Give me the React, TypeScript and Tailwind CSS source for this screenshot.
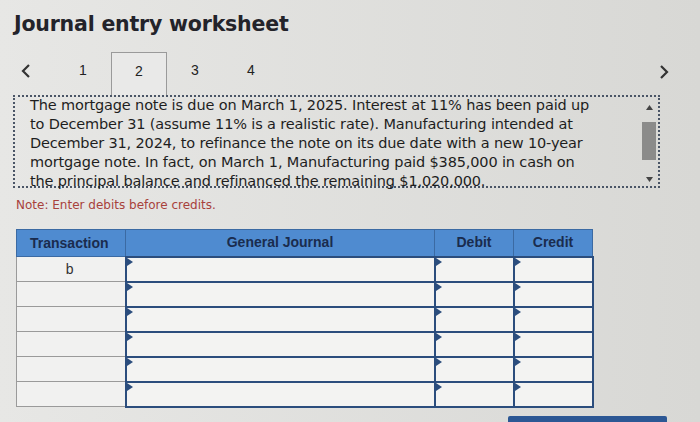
import React from "react";

const lines = [
  "The mortgage note is due on March 1, 2025. Interest at 11% has been paid up",
  "to December 31 (assume 11% is a realistic rate). Manufacturing intended at",
  "December 31, 2024, to refinance the note on its due date with a new 10-year",
  "mortgage note. In fact, on March 1, Manufacturing paid $385,000 in cash on",
  "the principal balance and refinanced the remaining $1,020,000.",
];

function InputCell({ w }: { w: string }) {
  return (
    <td className={`relative ${w} h-[25px] border-2 border-[#2b4d7d] bg-[#f3f3f2] p-0`}>
      <span className="absolute left-0 top-0 w-0 h-0 border-t-[4px] border-b-[4px] border-l-[6px] border-t-transparent border-b-transparent border-l-[#2b4d7d]" />
    </td>
  );
}

export default function App() {
  return (
    <div className="w-[700px] h-[422px] overflow-hidden bg-gradient-to-r from-[#e7e7e5] to-[#d8d8d5] font-['DejaVu_Sans',sans-serif] text-[#222]">
      <h1 className="pt-[10px] pl-[14px] text-[20.5px] leading-[28px] font-bold tracking-[-0.2px] text-[#23232a]">
        Journal entry worksheet
      </h1>

      {/* tabs */}
      <div className="mt-[14px] flex items-stretch h-[43px] pl-[14px] pr-[30px] text-[14px] font-['Liberation_Sans',sans-serif]">
        <div className="w-[41px] flex items-center pl-[6px] pb-[6px]">
          <svg width="12" height="16" viewBox="0 0 12 16"><path d="M9 2 L3 8 L9 14" stroke="#333" strokeWidth="2.2" fill="none" /></svg>
        </div>
        <div className="w-[56px] flex items-center justify-center pb-[6px]">1</div>
        <div className="w-[56px] flex items-center justify-center pb-[6px] border border-b-0 border-[#9a9a9a] bg-[#e9e9e8]">2</div>
        <div className="w-[56px] flex items-center justify-center pb-[6px]">3</div>
        <div className="w-[56px] flex items-center justify-center pb-[6px]">4</div>
        <div className="flex-1" />
        <div className="flex items-center pb-[4px]">
          <svg width="12" height="16" viewBox="0 0 12 16"><path d="M3 2 L9 8 L3 14" stroke="#333" strokeWidth="2.2" fill="none" /></svg>
        </div>
      </div>

      {/* problem text */}
      <div className="ml-[13px] w-[647px] h-[93px] border-2 border-dotted border-[#4a5566] flex">
        <div className="flex-1 -mt-[1px] pl-[15px] text-[14.5px] leading-[19px] tracking-[-0.15px] text-[#1e1e1e]">
          {lines.map((l, i) => (
            <div key={i}>{l}</div>
          ))}
        </div>
        <div className="w-[16px] flex flex-col items-center pt-[8px] pb-[4px] mr-[1px]">
          <svg width="7" height="5" viewBox="0 0 7 5"><path d="M0 5 L3.5 0 L7 5Z" fill="#444" /></svg>
          <div className="mt-[12px] w-[14px] h-[38px] bg-[#8b8b8a]" />
          <div className="flex-1" />
          <svg width="7" height="5" viewBox="0 0 7 5"><path d="M0 0 L3.5 5 L7 0Z" fill="#444" /></svg>
        </div>
      </div>

      <p className="mt-[9px] pl-[16px] text-[12px] leading-[16px] text-[#a8413c]">Note: Enter debits before credits.</p>

      {/* journal table */}
      <table className="mt-[16px] ml-[16px] border-collapse text-[14px] font-['Liberation_Sans',sans-serif]">
        <thead>
          <tr className="h-[27px] bg-[#4f8bd0] text-[#1a2c4e] font-bold">
            <th className="w-[109px] text-left pl-[13px] font-bold border border-[#3b6aa3]">Transaction</th>
            <th className="w-[309px] text-center font-bold border border-[#3b6aa3]">General Journal</th>
            <th className="w-[79px] text-center font-bold border border-[#3b6aa3]">Debit</th>
            <th className="w-[79px] text-center font-bold border border-[#3b6aa3]">Credit</th>
          </tr>
        </thead>
        <tbody>
          {[0, 1, 2, 3, 4, 5].map((r) => (
            <tr key={r}>
              <td className="w-[109px] h-[25px] border border-[#9a9a9a] bg-[#f1f1f0] text-center text-[14px] text-[#333] pr-[2px]">
                {r === 0 ? "b" : ""}
              </td>
              <InputCell w="w-[309px]" />
              <InputCell w="w-[79px]" />
              <InputCell w="w-[79px]" />
            </tr>
          ))}
        </tbody>
      </table>

      {/* buttons, partly out of view */}
      <div className="mt-[8px] flex items-end">
        <div className="ml-[277px] w-[86px] h-[4px] mt-[10px] bg-[#7d9cc8]" />
        <div className="ml-[145px] w-[159px] h-[14px] bg-[#2c5794] rounded-t-[2px]" />
      </div>
    </div>
  );
}
